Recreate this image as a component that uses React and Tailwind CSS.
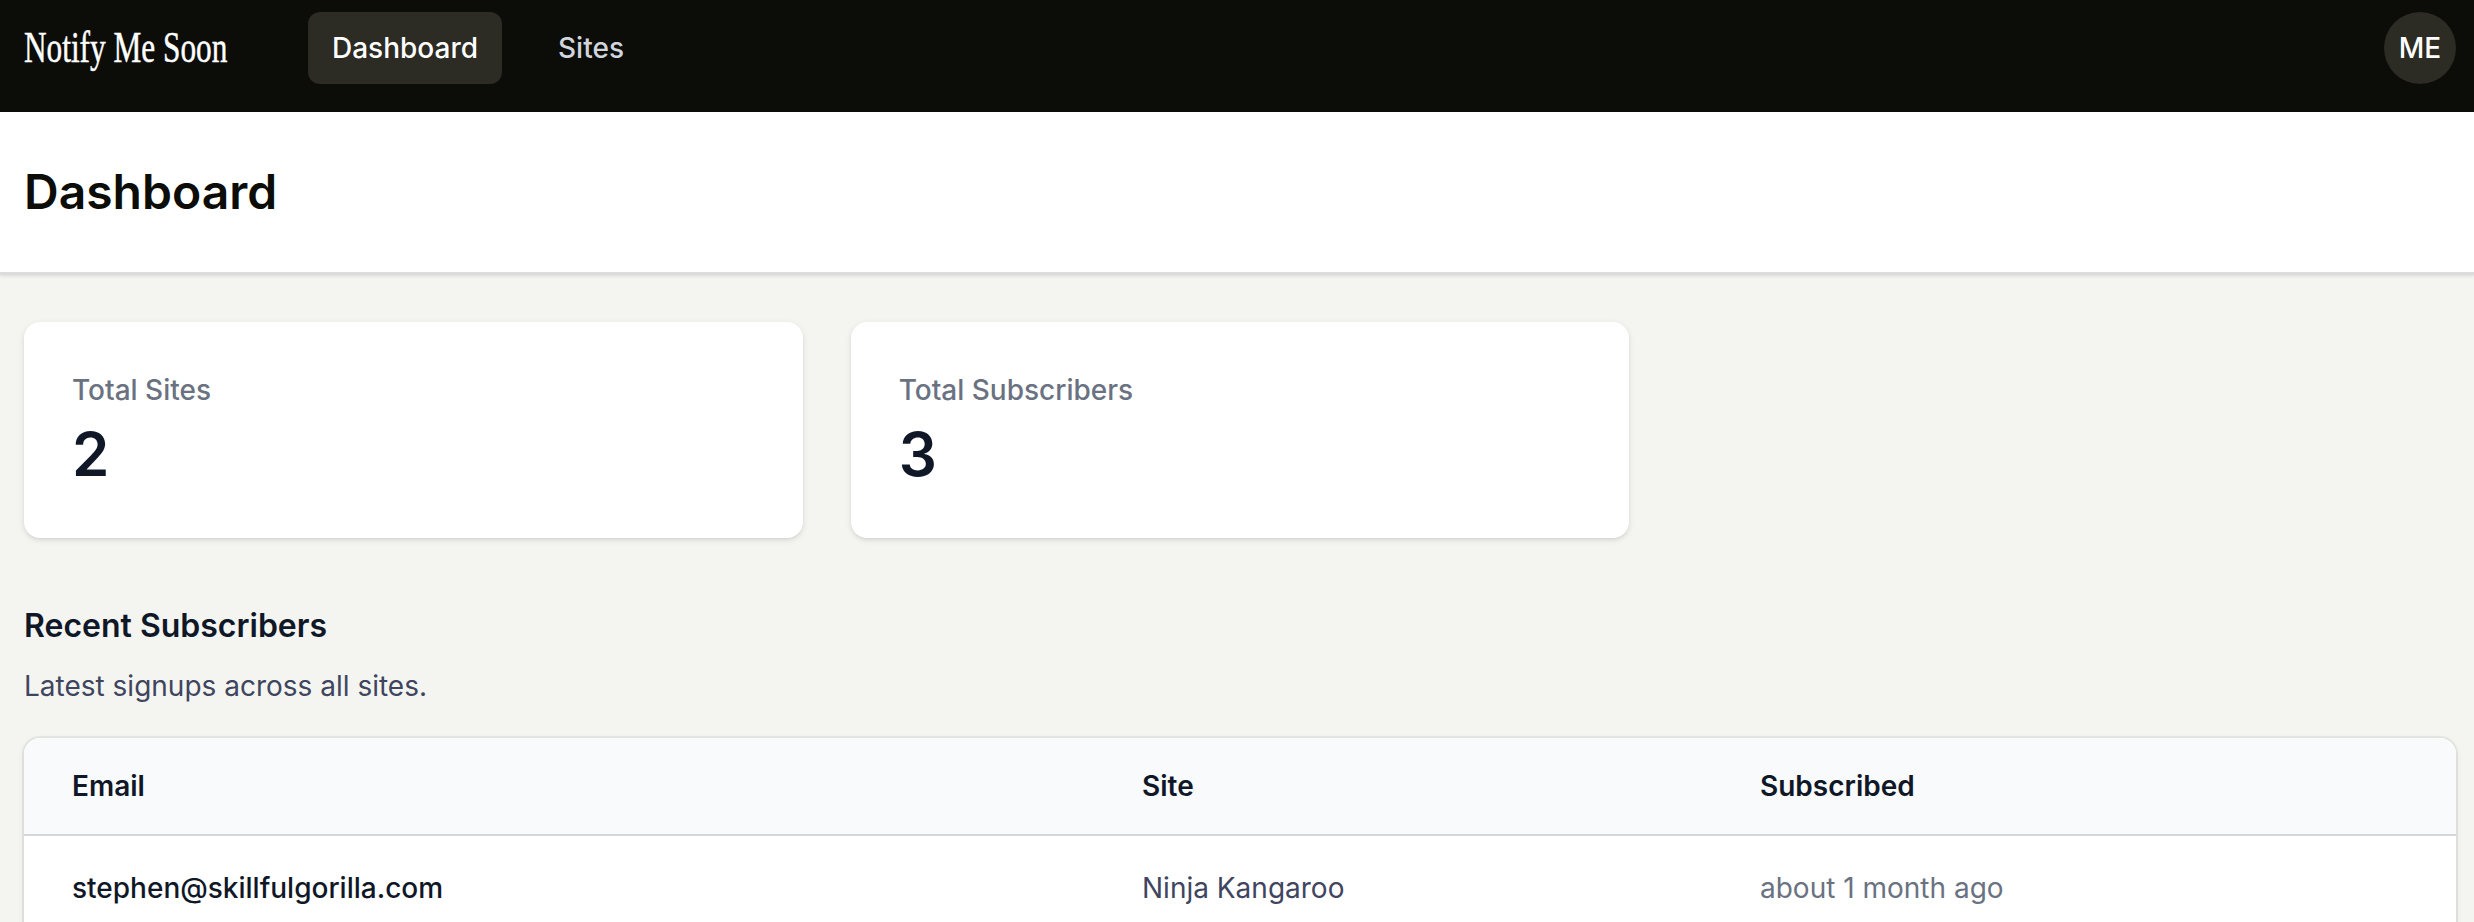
const navigation = [
  { name: 'Dashboard', current: true },
  { name: 'Sites', current: false },
];

const stats = [
  { name: 'Total Sites', value: 2 },
  { name: 'Total Subscribers', value: 3 },
];

const subscribers = [
  { email: 'stephen@skillfulgorilla.com', site: 'Ninja Kangaroo', subscribed: 'about 1 month ago' },
];

function Navbar() {
  return (
    <nav className="flex h-28 items-start bg-[#0c0d08] pt-3 pr-[18px] pl-6">
      <div className="flex h-18 w-[284px] items-center">
        <span className="origin-left scale-x-[0.711] font-['Liberation_Serif',serif] text-[44px] leading-none whitespace-nowrap text-white [-webkit-text-stroke:0.5px_white]">
          Notify Me Soon
        </span>
      </div>
      <div className="flex gap-8">
        {navigation.map((item) => (
          <a
            key={item.name}
            href="#"
            className={`flex h-18 items-center rounded-xl px-6 text-[28px] font-medium ${
              item.current ? 'bg-[#2c2b24] text-white' : 'text-gray-300'
            }`}
          >
            {item.name}
          </a>
        ))}
      </div>
      <button className="ml-auto flex size-18 items-center justify-center rounded-full bg-[#2c2b24] text-[28px] font-medium text-white">
        ME
      </button>
    </nav>
  );
}

function StatCard({ name, value }) {
  return (
    <div className="rounded-2xl bg-white p-12 shadow-[0_2px_6px_rgba(0,0,0,0.1),0_2px_4px_-2px_rgba(0,0,0,0.1)]">
      <dt className="text-[28px] leading-10 font-medium text-gray-500">{name}</dt>
      <dd className="mt-2 text-[60px] leading-18 font-semibold tracking-tight text-gray-900">{value}</dd>
    </div>
  );
}

function SubscribersTable() {
  return (
    <div className="overflow-hidden rounded-2xl bg-white shadow-[0_0_0_2px_rgba(0,0,0,0.05),0_2px_6px_rgba(0,0,0,0.1)]">
      <table className="w-full table-fixed text-left text-[28px] leading-10">
        <thead className="bg-[#f9fafb] text-gray-900">
          <tr className="border-b-2 border-[#d5d7d9]">
            <th className="w-[1070px] py-7 pl-12 font-semibold">Email</th>
            <th className="w-[618px] py-7 pl-12 font-semibold">Site</th>
            <th className="py-7 pl-12 font-semibold">Subscribed</th>
          </tr>
        </thead>
        <tbody>
          {subscribers.map((row) => (
            <tr key={row.email}>
              <td className="py-8 pl-12 font-medium text-gray-900">{row.email}</td>
              <td className="py-8 pl-12 text-[#40455f]">{row.site}</td>
              <td className="py-8 pl-12 text-gray-500">{row.subscribed}</td>
            </tr>
          ))}
        </tbody>
      </table>
    </div>
  );
}

export default function App() {
  return (
    <div className="h-screen overflow-hidden bg-[#f4f5f0] font-['Inter',sans-serif]">
      <Navbar />
      <header className="flex h-40 items-center bg-white px-6 shadow-[0_3px_1px_#dcdddb,0_5px_2px_#e4e5e2]">
        <h1 className="text-[48px] leading-none font-semibold text-[#0c0d08]">Dashboard</h1>
      </header>
      <main className="pt-[50px] pr-[18px] pl-6">
        <dl className="grid grid-cols-3 gap-12">
          {stats.map((stat) => (
            <StatCard key={stat.name} {...stat} />
          ))}
        </dl>
        <section className="mt-16">
          <h2 className="text-[32px] leading-12 font-semibold text-gray-900">Recent Subscribers</h2>
          <p className="mt-4 mb-8 text-[28px] leading-10 text-[#40455f]">Latest signups across all sites.</p>
          <SubscribersTable />
        </section>
      </main>
    </div>
  );
}
